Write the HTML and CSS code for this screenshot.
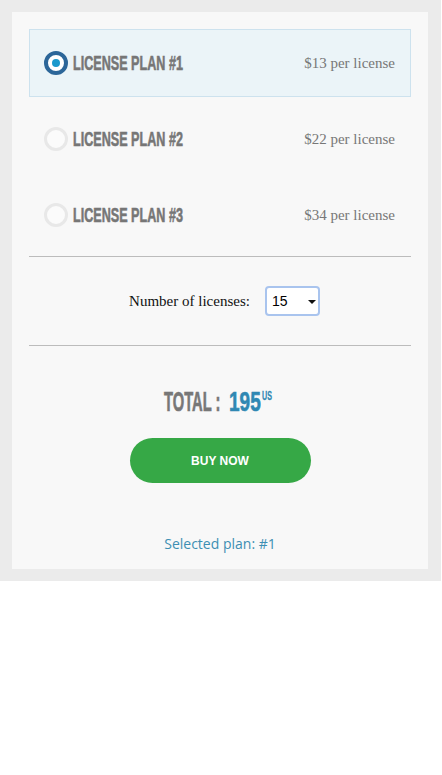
FILE: index.html
```html
<!DOCTYPE html>
<html>
<head>
<meta charset="utf-8">
<link rel="stylesheet" href="styles.css">
</head>
<body>
<div class="wrap">
  <div class="panel">
    <div class="plans">
      <label class="plan selected">
        <span class="radio"></span>
        <span class="plan-name">LICENSE PLAN #1</span>
        <span class="plan-price">$13 per license</span>
      </label>
      <label class="plan">
        <span class="radio"></span>
        <span class="plan-name">LICENSE PLAN #2</span>
        <span class="plan-price">$22 per license</span>
      </label>
      <label class="plan">
        <span class="radio"></span>
        <span class="plan-name">LICENSE PLAN #3</span>
        <span class="plan-price">$34 per license</span>
      </label>
    </div>
    <hr class="divider divider-top">
    <div class="count-row">
      <span class="count-label">Number of licenses:</span>
      <span class="select-box">
        <select class="count-select">
          <option>15</option>
        </select>
      </span>
    </div>
    <hr class="divider">
    <div class="total"><span class="tw tw-label"><span class="ts ts-label">TOTAL :</span></span><span class="tw tw-value"><span class="ts ts-value">195</span></span><span class="tw tw-cur"><span class="ts ts-cur">US</span></span></div>
    <div class="buy-row"><button class="buy">BUY NOW</button></div>
    <div class="selected-plan">Selected plan: #1</div>
  </div>
</div>
</body>
</html>
```

FILE: styles.css
```css
html, body {
  margin: 0;
  padding: 0;
  background: #ffffff;
}

.wrap {
  width: 441px;
  box-sizing: border-box;
  padding: 12px 13px 12px 12px;
  background: #ebebeb;
}

.panel {
  background: #f8f8f8;
  padding: 17px;
  height: 557px;
  box-sizing: border-box;
}

.plans {
  display: flex;
  flex-direction: column;
  gap: 8px;
}

.plan {
  display: flex;
  align-items: center;
  height: 68px;
  box-sizing: border-box;
  border: 1px solid transparent;
  padding: 0 15px 0 14px;
}

.plan.selected {
  background: #ebf4f8;
  border-color: #cde2ee;
}

.radio {
  width: 24px;
  height: 24px;
  box-sizing: border-box;
  border-radius: 50%;
  border: 3px solid #e8e8e8;
  background: #fbfbfb;
  flex: none;
  margin-right: 5px;
  display: flex;
  align-items: center;
  justify-content: center;
}

.plan.selected .radio {
  border: 4px solid #2c6699;
  background: #ffffff;
}

.plan.selected .radio::after {
  content: "";
  width: 8px;
  height: 8px;
  border-radius: 50%;
  background: #1a98cc;
}

.plan-name {
  display: inline-block;
  width: 111px;
  white-space: nowrap;
  font-family: "Liberation Sans", Arial, sans-serif;
  font-weight: bold;
  font-size: 21px;
  color: #767676;
  -webkit-text-stroke: 0.6px #767676;
  transform: scaleX(0.6);
  transform-origin: left center;
}

.plan-price {
  margin-left: auto;
  font-family: "Liberation Serif", serif;
  font-size: 15px;
  color: #777777;
}

.divider {
  margin: 0;
  border: 0;
  height: 1px;
  background: #bcbcbc;
}

.divider-top {
  margin-top: 7px;
}

.count-row {
  height: 88px;
  display: flex;
  align-items: center;
  justify-content: center;
  gap: 15px;
  padding-left: 9px;
}

.count-label {
  font-family: "Liberation Serif", serif;
  font-size: 15px;
  color: #111111;
}

.select-box {
  position: relative;
  display: inline-block;
  height: 30px;
}

.count-select {
  appearance: none;
  -webkit-appearance: none;
  display: block;
  width: 55px;
  height: 30px;
  box-sizing: border-box;
  border: 2px solid #a9c4ee;
  border-radius: 4px;
  background: #ffffff;
  font-family: "Liberation Sans", Arial, sans-serif;
  font-size: 14px;
  color: #000000;
  padding: 0 0 0 5px;
  outline: none;
}

.select-box::after {
  content: "";
  position: absolute;
  right: 4px;
  top: 14px;
  border-left: 4px solid transparent;
  border-right: 4px solid transparent;
  border-top: 4px solid #111111;
  pointer-events: none;
}

.total {
  margin-top: 41px;
  height: 30px;
  text-align: center;
  font-family: "Liberation Sans", Arial, sans-serif;
  font-weight: bold;
  font-size: 28px;
  line-height: 30px;
  white-space: nowrap;
  padding-right: 3px;
}

.tw {
  display: inline-block;
  text-align: left;
}

.ts {
  display: inline-block;
  transform-origin: left center;
}

.tw-label {
  width: 65px;
}

.ts-label {
  color: #777777;
  -webkit-text-stroke: 0.7px #777777;
  transform: scaleX(0.525);
}

.tw-value {
  width: 33px;
}

.ts-value {
  color: #2f88b3;
  -webkit-text-stroke: 0.6px #2f88b3;
  transform: scaleX(0.68);
}

.tw-cur {
  width: 11px;
  font-size: 12.5px;
  line-height: 13px;
  vertical-align: 11px;
}

.ts-cur {
  color: #2f88b3;
  -webkit-text-stroke: 0.3px #2f88b3;
  transform: scaleX(0.57);
}

.buy-row {
  display: flex;
  justify-content: center;
  margin-top: 21px;
}

.buy {
  width: 181px;
  height: 45px;
  border: 0;
  border-radius: 23px;
  background: #36a846;
  color: #ffffff;
  font-family: "Liberation Sans", Arial, sans-serif;
  font-weight: bold;
  font-size: 12px;
  padding: 0;
}

.selected-plan {
  margin-top: 51px;
  text-align: center;
  font-family: "Open Sans", "Noto Sans", sans-serif;
  font-size: 14px;
  color: #3d8fb3;
}
```
